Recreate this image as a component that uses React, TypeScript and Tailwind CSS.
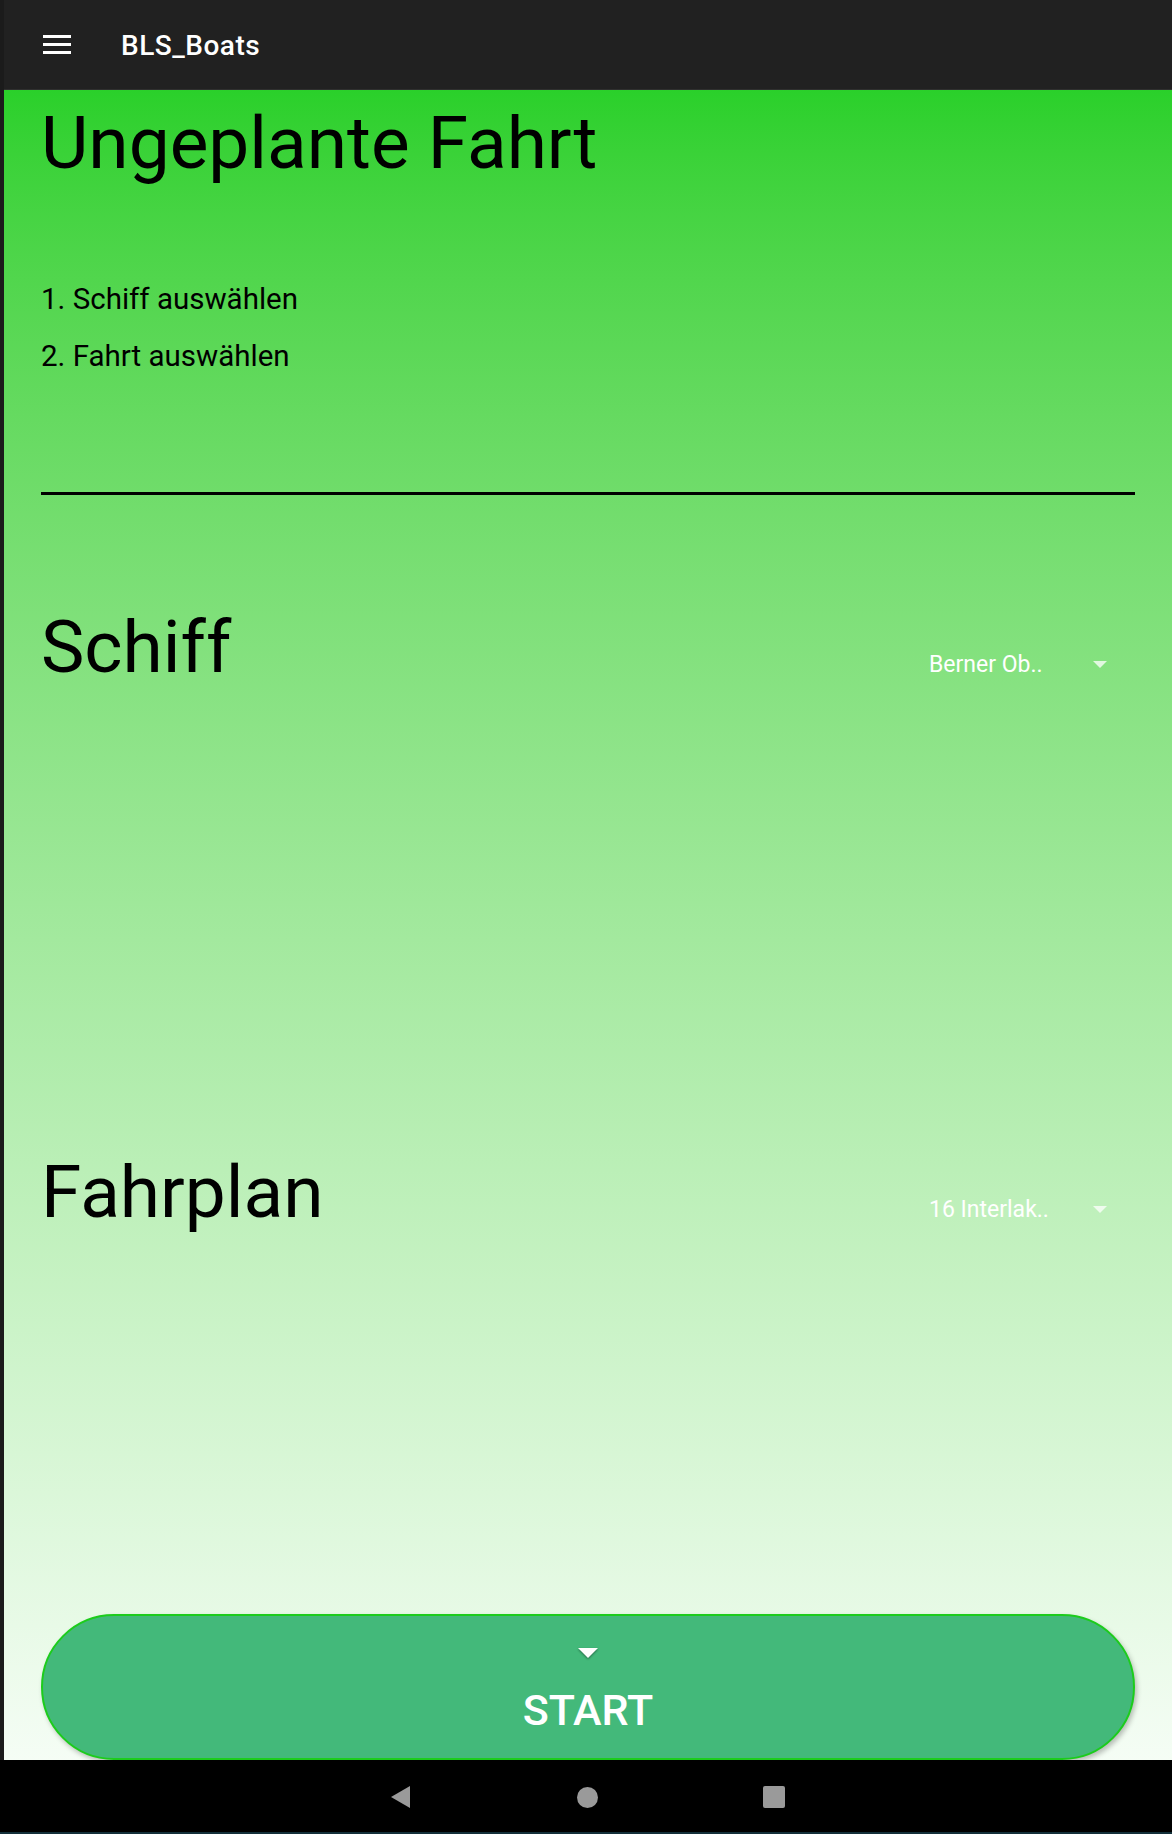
import { FC } from "react";

const DropArrow: FC = () => (
  <svg width="14" height="7" viewBox="0 0 14 7" className="shrink-0">
    <path d="M0 0 L14 0 L7 7 Z" fill="rgba(255,255,255,0.75)" />
  </svg>
);

interface PickerProp {
  value: string;
}

const Picker: FC<PickerProp> = ({ value }) => (
  <div className="flex items-center w-[206px] pr-[28px]">
    <span className="text-[23px] leading-[27px] text-white">{value}</span>
    <span className="ml-auto">
      <DropArrow />
    </span>
  </div>
);

interface SectionProp {
  title: string;
  value: string;
}

const Section: FC<SectionProp> = ({ title, value }) => (
  <div className="flex items-baseline justify-between">
    <h2 className="text-[73px] leading-[80px] text-black">{title}</h2>
    <Picker value={value} />
  </div>
);

export default function App() {
  return (
    <div className="w-[1172px] h-[1834px] flex flex-col font-['Roboto',sans-serif] overflow-hidden">
      <div className="flex flex-1">
        <div className="w-[4px] bg-[#1b1b1b]" />
        <div className="flex flex-col flex-1">
          {/* toolbar */}
          <header className="h-[90px] bg-[#212121] flex items-center border-b border-[#2f2f2f]">
            <div className="ml-[39px] w-[28px] flex flex-col gap-[5px]">
              <span className="h-[3px] bg-white" />
              <span className="h-[3px] bg-white" />
              <span className="h-[3px] bg-white" />
            </div>
            <span className="ml-[50px] mt-[2px] text-[28px] tracking-[0.5px] font-medium text-white">BLS_Boats</span>
          </header>

          <main className="flex-1 flex flex-col bg-linear-to-b from-[#2ad02a] to-[#f5fdf5] pl-[37px] pr-[37px] pt-[13px]">
            <h1 className="text-[73px] leading-[80px] text-black">Ungeplante Fahrt</h1>

            <ol className="mt-[88px] text-[29.5px] leading-[57px] text-black">
              <li>1. Schiff auswählen</li>
              <li>2. Fahrt auswählen</li>
            </ol>

            <div className="mt-[107px] h-[3px] bg-black" />

            <div className="mt-[112px]">
              <Section title="Schiff" value="Berner Ob.." />
            </div>
            <div className="mt-[465px]">
              <Section title="Fahrplan" value="16 Interlak.." />
            </div>

            <button className="mt-auto h-[146px] w-full rounded-full bg-[#43b97a] border-2 border-[#1ccc1c] shadow-[2px_3px_5px_rgba(0,0,0,0.25)] flex flex-col items-center pt-[31px]">
              <svg width="22" height="12" viewBox="0 0 22 12" className="drop-shadow-[0_1px_1px_rgba(0,0,0,0.45)]">
                <path d="M1 1 L21 1 L11 11 Z" fill="#ffffff" />
              </svg>
              <span className="mt-[26px] text-[43px] leading-[50px] font-medium text-white">START</span>
            </button>
          </main>
        </div>
      </div>

      {/* system nav */}
      <nav className="h-[74px] bg-black flex items-center justify-center relative">
        <div className="flex items-center ml-[2px]">
          <svg width="22" height="24" viewBox="0 0 22 24">
            <path d="M21 1 L21 23 L2 12 Z" fill="#9a9a9a" />
          </svg>
          <span className="ml-[166px] w-[21px] h-[21px] rounded-full bg-[#9a9a9a]" />
          <span className="ml-[165px] w-[22px] h-[22px] rounded-[2px] bg-[#9a9a9a]" />
        </div>
        <div className="absolute bottom-0 left-0 right-0 h-[2px] bg-[#13303a]" />
      </nav>
    </div>
  );
}
